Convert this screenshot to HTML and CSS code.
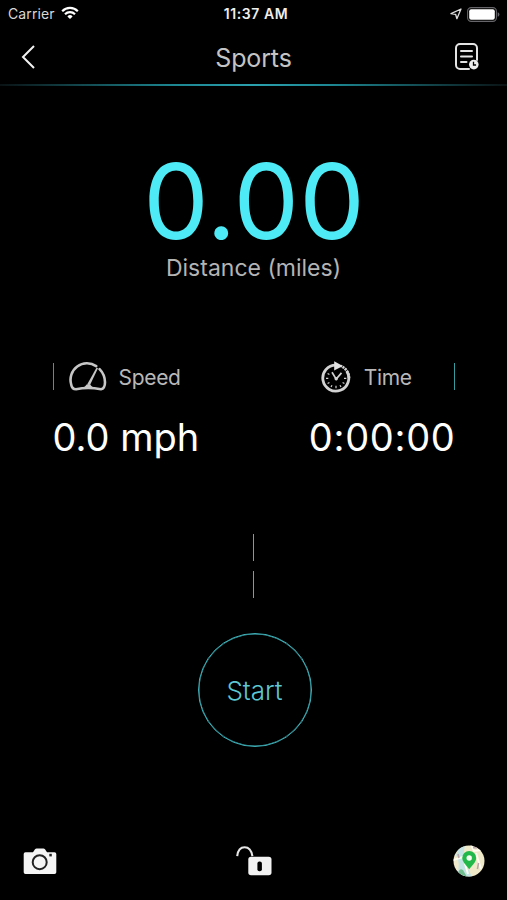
FILE: index.html
```html
<!DOCTYPE html>
<html lang="en">
<head>
    <meta charset="UTF-8">
    <meta name="viewport" content="width=device-width, initial-scale=1.0">
    <title>Sports</title>
    <link rel="stylesheet" href="styles.css">
</head>
<body>
    <div class="screen">
        <div class="status-bar">
            <div class="status-left">
                <span class="carrier">Carrier</span>
                <svg class="wifi" width="18" height="14" viewBox="0 0 18 14" fill="none" stroke="#fff" stroke-width="2.2">
                    <path d="M1.2 5.2a11 11 0 0 1 15.6 0"/>
                    <path d="M4 8.2a7.1 7.1 0 0 1 10 0"/>
                    <path d="M9 13L6.4 10.4a3.7 3.7 0 0 1 5.2 0z" fill="#fff" stroke="none"/>
                </svg>
            </div>
            <span class="clock">11:37 AM</span>
            <div class="status-right">
                <svg width="12" height="12" viewBox="0 0 12 12" fill="none" stroke="#ddd" stroke-width="1.3" stroke-linejoin="round">
                    <path d="M11 1L1 5.7L5.6 6.3L6.9 10.7z"/>
                </svg>
                <svg width="33" height="15" viewBox="0 0 33 15">
                    <rect x=".6" y=".6" width="28.8" height="13.8" rx="3.6" fill="none" stroke="#66666a" stroke-width="1.1"/>
                    <rect x="2.2" y="2.2" width="25.6" height="10.6" rx="2" fill="#fff"/>
                    <path d="M30.7 5.2q1.7.5 1.7 2.3t-1.7 2.3z" fill="#66666a"/>
                </svg>
            </div>
        </div>

        <div class="nav-bar">
            <svg width="14" height="24" viewBox="0 0 14 24" fill="none" stroke="#f2f2f2" stroke-width="2">
                <path d="M13 1L2 12L13 23"/>
            </svg>
            <h1>Sports</h1>
            <svg width="24" height="28" viewBox="0 0 24 28" fill="none" stroke="#e4e4e4" stroke-width="2" stroke-linecap="round">
                <path d="M14 26H5a4 4 0 0 1-4-4V5a4 4 0 0 1 4-4h13a4 4 0 0 1 4 4v12"/>
                <path d="M6 8h11M6 13.5h11M6 19h5.5"/>
                <circle cx="18.8" cy="21.6" r="4.8" fill="#eee" stroke="none"/>
                <path d="M18.5 18.8v3.2h2.6" stroke="#000" stroke-width="1.3" stroke-linecap="butt"/>
            </svg>
        </div>
        <div class="nav-line"></div>

        <div class="distance">
            <div class="distance-value">0.00</div>
            <div class="distance-label">Distance (miles)</div>
        </div>

        <div class="stats">
            <div class="stat">
                <div class="stat-header">
                    <span class="tick"></span>
                    <svg class="gauge" width="38" height="30" viewBox="0 0 38 30" fill="none" stroke="#c6c6c6" stroke-width="2.6" stroke-linecap="round">
                        <path d="M27.2 4.1A16.5 16.5 0 0 0 2.2 22.5Q3 27.3 7 27.3Q19 24.8 32 27.3Q36 26.5 36 20.3Q35.8 12.5 30.6 7.2"/>
                        <path d="M27.6 5.5L18.4 22L21 23L29 6.3z" fill="#c6c6c6" stroke="none"/>
                        <path d="M13.5 27Q14 25.5 16.4 24A3.3 3.3 0 0 1 22.4 24Q25 25.5 26 27z" fill="#c6c6c6" stroke="none"/>
                    </svg>
                    <span class="speed-label">Speed</span>
                </div>
                <div class="stat-value speed-value">0.0 mph</div>
            </div>
            <div class="stat">
                <div class="stat-header stat-header-end">
                    <svg class="timer" width="30" height="32" viewBox="0 0 30 32" fill="none" stroke="#d2d2d2">
                        <path d="M15 4.1A13 13 0 1 0 25.8 10.2" stroke-width="2.8"/>
                        <path d="M28 17A13 13 0 0 0 20 5.1" stroke-width="2.7" stroke-dasharray="2.1 .7"/>
                        <path d="M13.2 .3L21.8 5.1L13.2 9.5z" fill="#e2e2e2" stroke="none"/>
                        <path d="M11 11.2L15.2 18.1L20.5 11.9" stroke-width="1.7"/>
                        <circle cx="15.2" cy="17.7" r="1.7" fill="#d2d2d2" stroke="none"/>
                        <path d="M5 17.4h2.3M23 17.4h2.3M15 24.8v2.5M6.6 12.4l1.8 1M6.6 22.4l1.8-1M10 26l1-1.8M20 26l-1-1.8M23.4 22.4l-1.8-1" stroke-width="1.2"/>
                    </svg>
                    <span class="time-label">Time</span>
                    <span class="tick"></span>
                </div>
                <div class="stat-value time-value">0:00:00</div>
            </div>
        </div>

        <div class="divider">
            <span class="tick"></span>
            <span class="tick"></span>
        </div>

        <button class="start-btn">Start</button>

        <div class="tool-bar">
            <svg width="34" height="27" viewBox="0 0 34 27">
                <path d="M2.5 4.3H10L12 1.2Q12.7.4 13.5.4H20.5Q21.3.4 22 1.2L24 4.3H31.5Q33.3 4.3 33.3 6.1V24.2Q33.3 26 31.5 26H2.5Q.7 26 .7 24.2V6.1Q.7 4.3 2.5 4.3z" fill="#f5f5f5"/>
                <circle cx="16.7" cy="14.2" r="7" fill="none" stroke="#222" stroke-width="2"/>
                <rect x="26.3" y="5.8" width="2.5" height="2.6" fill="#222"/>
            </svg>
            <svg class="lock" width="36" height="30" viewBox="0 0 36 30">
                <path d="M1.2 10.2Q2.2 1.3 8.6 1.3Q15 1.3 16.4 10.2" fill="none" stroke="#e6e6e6" stroke-width="2.1"/>
                <rect x="12.3" y="10.8" width="23.2" height="18.5" rx="2.8" fill="#f2f2f2"/>
                <rect x="21.4" y="15.4" width="4.5" height="9.8" rx="2" fill="#000"/>
            </svg>
            <svg width="32" height="32" viewBox="0 0 32 32">
                <defs><clipPath id="disc"><circle cx="16" cy="16" r="15.5"/></clipPath></defs>
                <g clip-path="url(#disc)">
                    <rect width="32" height="32" fill="#efe8c9"/>
                    <path d="M7 0L12 0Q9 12 13 19L19 32H4Q8 17 3 10z" fill="#c4e3e4"/>
                    <path d="M5 32Q5 22 10 25L14 32z" fill="#72bd90"/>
                    <path d="M18 0L21 6L28 5M23 8L28 24M0 15L10 12L15 29" fill="none" stroke="#fffdf0" stroke-width="2"/>
                    <path d="M20 2.8h4M25.6 18l-1.2 6M5 9l1 4" stroke="#b8a5ad" stroke-width="1.5"/>
                    <path d="M16.2 24.3L10.9 17.8Q9.2 15.6 9.2 13A7 7 0 0 1 23.2 13Q23.2 15.6 21.5 17.8z" fill="#22b94a"/>
                    <circle cx="16.2" cy="13" r="2.7" fill="#f7fff0"/>
                </g>
            </svg>
        </div>
    </div>
</body>
</html>
```

FILE: styles.css
```css
* {
    box-sizing: border-box;
}

body {
    margin: 0;
    background-color: #000;
    color: #fff;
    font-family: Inter, "Liberation Sans", sans-serif;
}

svg {
    display: block;
    flex-shrink: 0;
}

.screen {
    width: 507px;
    height: 900px;
    display: flex;
    flex-direction: column;
    align-items: center;
    overflow: hidden;
}

.status-bar {
    width: 100%;
    height: 28px;
    padding: 0 7px 0 8px;
    display: grid;
    grid-template-columns: 1fr auto 1fr;
    align-items: center;
    line-height: 28px;
}

.status-left {
    display: flex;
    align-items: center;
    gap: 6px;
}

.carrier {
    color: #d8d8d8;
    font-size: 14px;
    letter-spacing: 0.12px;
}

.wifi {
    margin-top: -2px;
}

.clock {
    margin-left: 4px;
    font-size: 14px;
    font-weight: 600;
    color: #eee;
    letter-spacing: 0.6px;
}

.status-right {
    display: flex;
    align-items: center;
    justify-content: flex-end;
    gap: 5px;
}

.nav-bar {
    width: 100%;
    height: 57px;
    padding: 1px 28px 0 21px;
    display: flex;
    align-items: center;
    justify-content: space-between;
}

h1 {
    margin: 2px 0 0 17px;
    font-size: 25px;
    font-weight: 400;
    letter-spacing: -0.15px;
    color: #c4c4c4;
}

.nav-line {
    width: 100%;
    height: 2px;
    margin-top: -1px;
    background: linear-gradient(to right, #0a1214, #1c8590 34%, #2ba0ad 50%, #1c8590 66%, #0a1214);
}

.distance {
    margin-top: 63px;
    text-align: center;
}

.distance-value {
    height: 105px;
    padding-left: 1px;
    font-size: 104px;
    line-height: 104px;
    color: #4eeaf5;
}

.distance-label {
    font-size: 23px;
    line-height: 28px;
    color: #b4b4b4;
}

.stats {
    width: 402px;
    margin-top: 80px;
    display: flex;
    justify-content: space-between;
}

.stat-header {
    height: 30px;
    display: flex;
    align-items: center;
    font-size: 21px;
    color: #b8b8b8;
}

.speed-label {
    letter-spacing: -0.3px;
}

.time-label {
    letter-spacing: -0.4px;
}

.stat-header-end {
    padding-left: 12px;
}

.tick {
    width: 1px;
    height: 27px;
    background-color: #379ca0;
}

.stat-header .tick {
    margin-top: -2px;
}

.stat-header-end .tick {
    margin-left: auto;
}

.gauge {
    margin: 0 12px 0 15px;
}

.timer {
    margin-right: 13px;
}

.stat-value {
    margin-top: 20px;
    font-size: 38px;
    line-height: 50px;
    white-space: nowrap;
}

.time-value {
    letter-spacing: 0.7px;
    margin-right: -1px;
}

.divider {
    margin-top: 72px;
    display: flex;
    flex-direction: column;
    gap: 10px;
}

.divider .tick {
    background-color: #43b4b8;
}

.start-btn {
    width: 114px;
    height: 114px;
    margin: 35px 0 0 2px;
    padding: 0;
    border: 1px solid #3eb0b8;
    box-shadow: inset 0 0 0 0.5px #3eb0b8;
    border-radius: 50%;
    background: none;
    color: #5cc8d2;
    font-family: inherit;
    font-size: 26px;
    font-weight: 300;
}

.tool-bar {
    width: 100%;
    height: 32px;
    margin: auto 0 23px;
    padding: 0 22px 0 23px;
    display: flex;
    align-items: center;
    justify-content: space-between;
}

.lock {
    margin-right: 2px;
}
```
